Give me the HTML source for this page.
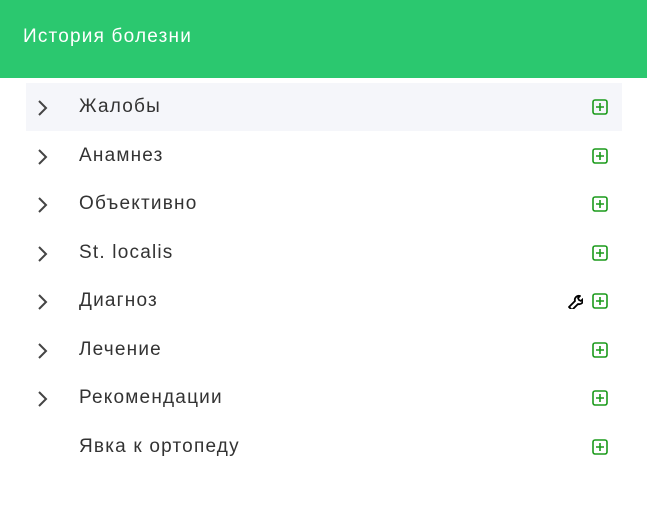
<!DOCTYPE html>
<html><head><meta charset="utf-8"><style>
body{margin:0;width:647px;height:517px;background:#fff;font-family:"Liberation Sans",sans-serif;overflow:hidden;position:relative}
.hd{position:absolute;left:0;top:0;width:647px;height:78px;background:#2bc86f;color:#fff;font-size:19px}
.hd span{position:absolute;left:23px;top:26px;letter-spacing:1.2px}
.row{position:absolute;left:26px;width:596px;height:48px;color:#333;font-size:19px}
.row.h{background:#f5f6fa}
.row .t{position:absolute;left:53px;top:13px;letter-spacing:1.2px}
.row svg.c{position:absolute;left:11px;top:16px}
.row svg.p{position:absolute;left:566px;top:16px}
.row svg.w{position:absolute;left:541px;top:16px}
</style></head><body>
<div class="hd"><span>История болезни</span></div>
<div class="row h" style="top:83px"><svg class="c" width="12" height="18"><path d="M2 2l7 7-7 7" fill="none" stroke="#444" stroke-width="2"/></svg><span class="t">Жалобы</span><svg class="p" width="16" height="16"><rect x="1" y="1" width="14" height="14" rx="2" fill="none" stroke="#1a9a1a" stroke-width="1.6"/><path d="M8 4v8M4 8h8" stroke="#1a9a1a" stroke-width="1.6"/></svg></div>
<div class="row" style="top:132px"><svg class="c" width="12" height="18"><path d="M2 2l7 7-7 7" fill="none" stroke="#444" stroke-width="2"/></svg><span class="t">Анамнез</span><svg class="p" width="16" height="16"><rect x="1" y="1" width="14" height="14" rx="2" fill="none" stroke="#1a9a1a" stroke-width="1.6"/><path d="M8 4v8M4 8h8" stroke="#1a9a1a" stroke-width="1.6"/></svg></div>
<div class="row" style="top:180px"><svg class="c" width="12" height="18"><path d="M2 2l7 7-7 7" fill="none" stroke="#444" stroke-width="2"/></svg><span class="t">Объективно</span><svg class="p" width="16" height="16"><rect x="1" y="1" width="14" height="14" rx="2" fill="none" stroke="#1a9a1a" stroke-width="1.6"/><path d="M8 4v8M4 8h8" stroke="#1a9a1a" stroke-width="1.6"/></svg></div>
<div class="row" style="top:229px"><svg class="c" width="12" height="18"><path d="M2 2l7 7-7 7" fill="none" stroke="#444" stroke-width="2"/></svg><span class="t">St. localis</span><svg class="p" width="16" height="16"><rect x="1" y="1" width="14" height="14" rx="2" fill="none" stroke="#1a9a1a" stroke-width="1.6"/><path d="M8 4v8M4 8h8" stroke="#1a9a1a" stroke-width="1.6"/></svg></div>
<div class="row" style="top:277px"><svg class="c" width="12" height="18"><path d="M2 2l7 7-7 7" fill="none" stroke="#444" stroke-width="2"/></svg><span class="t">Диагноз</span><svg class="w" width="16" height="16"><path d="M2 14l6-6a4 4 0 0 1 5-5l-2 2 1 2 2 1 2-2a4 4 0 0 1-5 5l-6 6z" fill="none" stroke="#000" stroke-width="1.8" stroke-linejoin="round"/></svg><svg class="p" width="16" height="16"><rect x="1" y="1" width="14" height="14" rx="2" fill="none" stroke="#1a9a1a" stroke-width="1.6"/><path d="M8 4v8M4 8h8" stroke="#1a9a1a" stroke-width="1.6"/></svg></div>
<div class="row" style="top:326px"><svg class="c" width="12" height="18"><path d="M2 2l7 7-7 7" fill="none" stroke="#444" stroke-width="2"/></svg><span class="t">Лечение</span><svg class="p" width="16" height="16"><rect x="1" y="1" width="14" height="14" rx="2" fill="none" stroke="#1a9a1a" stroke-width="1.6"/><path d="M8 4v8M4 8h8" stroke="#1a9a1a" stroke-width="1.6"/></svg></div>
<div class="row" style="top:374px"><svg class="c" width="12" height="18"><path d="M2 2l7 7-7 7" fill="none" stroke="#444" stroke-width="2"/></svg><span class="t">Рекомендации</span><svg class="p" width="16" height="16"><rect x="1" y="1" width="14" height="14" rx="2" fill="none" stroke="#1a9a1a" stroke-width="1.6"/><path d="M8 4v8M4 8h8" stroke="#1a9a1a" stroke-width="1.6"/></svg></div>
<div class="row" style="top:423px"><span class="t">Явка к ортопеду</span><svg class="p" width="16" height="16"><rect x="1" y="1" width="14" height="14" rx="2" fill="none" stroke="#1a9a1a" stroke-width="1.6"/><path d="M8 4v8M4 8h8" stroke="#1a9a1a" stroke-width="1.6"/></svg></div>
</body></html>
